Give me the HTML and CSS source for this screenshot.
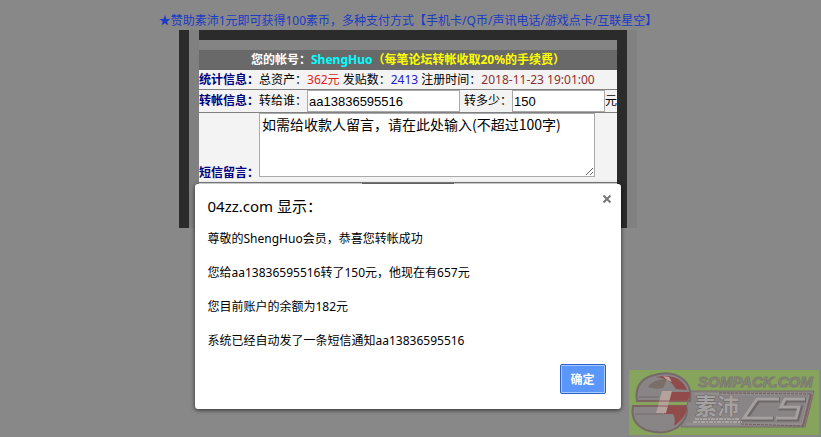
FILE: index.html
```html
<!DOCTYPE html>
<html lang="zh-CN">
<head>
  <meta charset="UTF-8" />
  <meta name="viewport" content="width=device-width, initial-scale=1.0"/>
  <title>论坛转帐</title>
  <link rel="stylesheet" href="styles.css">
</head>
<body>
  <a class="sponsor" href="#">★赞助素沛1元即可获得100素币，多种支付方式【手机卡/Q币/声讯电话/游戏点卡/互联星空】</a>

  <div class="frame">
    <form class="panel">
      <h1 class="title">您的帐号：<span class="user">ShengHuo</span><span class="fee">（每笔论坛转帐收取20%的手续费）</span></h1>
      <div class="row">
        <b class="label">统计信息：</b>总资产：<span class="money">362元</span>&nbsp;发贴数：<span class="posts">2413</span>&nbsp;注册时间：<span class="date">2018-11-23 19:01:00</span>
      </div>
      <div class="row">
        <b class="label">转帐信息：</b><label for="to">转给谁：</label><input class="to" id="to" type="text" value="aa13836595516">
        <label class="amount-label" for="amount">转多少：</label><input class="amount" id="amount" type="text" value="150">元
      </div>
      <div class="row message">
        <label class="label" for="note">短信留言：</label><textarea class="note" id="note">如需给收款人留言，请在此处输入(不超过100字)</textarea>
      </div>
      <div class="row submit">
        <button class="send" type="button" aria-label="转帐"></button>
      </div>
    </form>
  </div>

  <div class="dialog" role="dialog" aria-labelledby="dialog-title">
    <div class="dialog-head">
      <h2 class="dialog-title" id="dialog-title">04zz.com 显示：</h2>
      <button class="close" type="button" aria-label="关闭">
        <svg width="10" height="10" viewBox="0 0 10 10"><path d="M1.5 1.5l7 7M8.5 1.5l-7 7" stroke="#777" stroke-width="2"/></svg>
      </button>
    </div>
    <p>尊敬的ShengHuo会员，恭喜您转帐成功</p>
    <p>您给aa13836595516转了150元，他现在有657元</p>
    <p>您目前账户的余额为182元</p>
    <p>系统已经自动发了一条短信通知aa13836595516</p>
    <div class="dialog-foot">
      <button class="ok" type="button">确定</button>
    </div>
  </div>

  <svg class="logo" width="192" height="67" viewBox="0 0 192 67">
    <rect width="190" height="65" fill="#87a45c"/>
    <path d="M62 21h123l-9 36H52z" fill="#898486" stroke="#776f6c"/>
    <path d="M66 24h114l-7 30H57" fill="none" stroke="#9b9695"/>
    <path d="M90 23l92 1M112 54l62 2" stroke="#7d5753" stroke-dasharray="3 1"/>
    <path d="M182 24l-8 32" stroke="#80625e" stroke-width="2"/>
    <!-- globe halves -->
    <path d="M8 31Q5 12 22 6q20-7 33 4 8 7 6 21z" fill="#898486" stroke="#75696a" stroke-width="2"/>
    <path d="M4 36h53q4 10-8 21-14 9-32 3Q1 53 4 36z" fill="#898486" stroke="#75696a" stroke-width="2"/>
    <path d="M19 17Q24 9 38 9L34 18q-7 2-15-1z" fill="#796f67"/>
    <path d="M27 7q24-5 31 13l-11-1Q41 8 27 7z" fill="#914b4b"/>
    <path d="M34 6l6 1 3 5-5-2z" fill="#b5a29b"/>
    <path d="M42 22h19q1 7-4 9H38z" fill="#914b4b"/>
    <path d="M38 35h19q3 10-12 21 2-8-1-12h-9z" fill="#914b4b"/>
    <path d="M33 21h10l-6 22H27z" fill="#b5a29b"/>
    <path d="M9 31h50M5 36h51" stroke="#8a5c5b"/>
    <path d="M6 44h28M10 27h20" stroke="#756b6b"/>
    <text class="logo-site" x="69" y="17">SOMPACK.COM</text>
    <text class="logo-name" x="66" y="44">素沛</text>
    <path d="M151 30h-22l-13 19h29M177 30h-20l-4 8h18l-3 11h-20" fill="none" stroke="#6f6868" stroke-width="5"/>
    <path d="M150 29h-22l-13 19h29M176 29h-20l-4 8h18l-3 11h-20" fill="none" stroke="#a5a1a1" stroke-width="3"/>
    <!-- worn strip under the name -->
    <path d="M66 49h45M64 52h49" stroke="#aaa5a5" stroke-width="2" stroke-dasharray="4 1 2 1"/>
  </svg>
</body>
</html>
```

FILE: styles.css
```css
* {
  box-sizing: border-box;
}

body {
  margin: 0;
  padding: 12px 5px 0 0;
  min-height: 100vh;
  background: #888888;
  color: #000;
  font: 12px/18px "Noto Sans", "Noto Sans CJK SC", sans-serif;
  display: flex;
  flex-direction: column;
  align-items: center;
  overflow: hidden;
}

button, input {
  font-family: inherit;
}

.sponsor {
  color: #1b3bc4;
  text-decoration: none;
  white-space: nowrap;
}

.frame {
  width: 458px;
  max-width: 100%;
  padding: 0 10px;
  border-left: 10px solid #2b2b2b;
  background: #808080;
}

.panel {
  padding: 10px 0;
  border: solid #2b2b2b;
  border-width: 10px 10px 0 0;
  background: #848484;
}

.title {
  margin: 0;
  background: #696969;
  color: #fff;
  font-size: 12px;
  line-height: 20px;
  text-align: center;
}

.user {
  color: #00ffff;
}

.fee {
  color: #ffff00;
}

.row {
  display: flex;
  align-items: center;
  min-height: 20px;
  border-bottom: 1px solid #808080;
  background: #f3f3f3;
  white-space: nowrap;
}

.label {
  color: #000080;
  font-weight: 700;
}

.money {
  color: #e01c1c;
}

.posts {
  color: #2020c8;
}

.date {
  color: #8b3030;
}

.to, .amount, .note {
  border: 1px solid #a9a9a9;
  border-radius: 0;
  background: #fff;
  color: #000;
}

.to, .amount {
  height: 22px;
  padding: 1px;
  font: 13px "Liberation Sans", sans-serif;
}

.to {
  width: 153px;
}

.amount {
  flex: 1;
  min-width: 0;
}

.amount-label {
  margin-left: 4px;
}

.message {
  align-items: flex-end;
}

.note {
  width: 336px;
  height: 64px;
  margin-bottom: 5px;
  padding: 2px;
  font: 14px/16px "Noto Sans CJK SC", monospace;
  resize: both;
}

.submit {
  justify-content: center;
  height: 35px;
  align-items: flex-start;
}

.send {
  width: 92px;
  height: 24px;
  border: 1px solid #777;
  background: #ddd;
}

.dialog {
  position: absolute;
  top: 184px;
  left: calc(50% - 216px);
  width: 426px;
  padding: 10px 15px 15px 13px;
  border-radius: 3px;
  background: #fff;
  box-shadow: 0 1px 4px rgba(0, 0, 0, 0.7);
}

.dialog-head {
  display: flex;
  justify-content: space-between;
  align-items: flex-start;
  margin-bottom: 12px;
}

.dialog-title {
  margin: 0;
  font-size: 15px;
  font-weight: 400;
  line-height: 24px;
}

.close {
  display: flex;
  margin-right: -6px;
  padding: 0;
  border: 0;
  background: none;
}

.dialog p {
  margin: 0 0 16px;
}

.dialog-foot {
  display: flex;
  justify-content: flex-end;
  margin-top: -2px;
}

.ok {
  width: 46px;
  height: 30px;
  padding: 0;
  border: 1px solid #2f62c9;
  border-radius: 2px;
  background: #5b96fb;
  box-shadow: inset 0 0 0 1px #a9c8ff;
  color: #fff;
  font-size: 12px;
  font-weight: 700;
}

.logo {
  position: absolute;
  right: 0;
  bottom: 0;
}

.logo-site {
  fill: #898c7f;
  stroke: #7b7a6c;
  stroke-width: 1px;
  font: italic 700 15px "Liberation Sans", sans-serif;
}

.logo-name {
  fill: #a5a1a1;
  stroke: #6f6868;
  stroke-width: 1px;
  paint-order: stroke;
  font: 700 22px "Noto Sans CJK SC", sans-serif;
}
```
